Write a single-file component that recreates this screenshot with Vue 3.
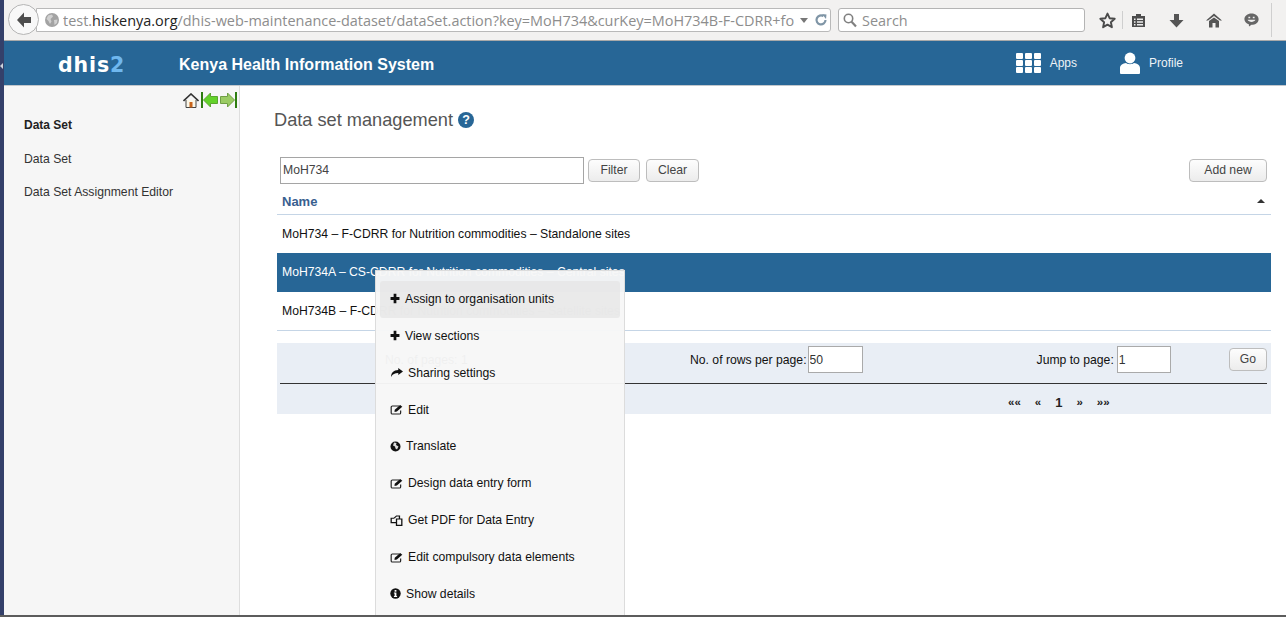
<template>
  <div class="screen">
    <div class="desktop-edge"><span class="edge-arrow"></span></div>
    <div class="window">
      <div class="browser-bar">
        <div class="back-btn">
          <svg width="20" height="20" viewBox="0 0 20 20"><path d="M10 2.5 L3 10 L10 17.5 L10 13 L17 13 L17 7 L10 7 Z" fill="#4d4d4d" /></svg>
        </div>
        <div class="url-box">
          <svg class="globe" width="14" height="14" viewBox="0 0 14 14">
            <circle cx="7" cy="7" r="7" fill="#a3a3a3" />
            <path d="M3 2.5 L7 1.5 L8 3.5 L5.5 6 L6.5 8.5 L5 11 L3.5 8 L1.5 6 Z M9 7 L12.5 6.5 L12 10 L9.5 12 Z" fill="#d0d0d0" />
          </svg>
          <span class="url"><span class="dim">test.</span>hiskenya.org<span class="dim">/dhis-web-maintenance-dataset/dataSet.action?key=MoH734&amp;curKey=MoH734B-F-CDRR+fo</span></span>
          <span class="url-drop"></span>
          <svg width="14" height="14" viewBox="0 0 14 14"><path d="M11.5 7 A4.5 4.5 0 1 1 9.5 3.2" fill="none" stroke="#7f95a6" stroke-width="2.2" /><path d="M8 1 L12.5 1.5 L12 6 Z" fill="#7f95a6" /></svg>
        </div>
        <div class="search-box">
          <svg width="14" height="15" viewBox="0 0 14 15"><circle cx="5.5" cy="5.5" r="4.2" fill="none" stroke="#808080" stroke-width="1.6" /><path d="M8.6 8.8 L13 13.4" stroke="#808080" stroke-width="2.2" /></svg>
          <span>Search</span>
        </div>
        <div class="tools">
          <svg class="t-star" width="17" height="17" viewBox="0 0 17 17"><path d="M8.5 1.6 L10.6 6.2 L15.7 6.8 L11.9 10.2 L12.9 15.2 L8.5 12.7 L4.1 15.2 L5.1 10.2 L1.3 6.8 L6.4 6.2 Z" fill="none" stroke="#4a4a4a" stroke-width="1.9" stroke-linejoin="round" /></svg>
          <span class="t-sep"></span>
          <svg class="t-clip" width="15" height="15" viewBox="0 0 15 15"><path d="M1 3 H5 V1 H10 V3 H14 V14 H1 Z" fill="#4d4d4d" /><path d="M3 5.5 H4.5 V7 H3 Z M6 5.5 H12 V7 H6 Z M3 8.2 H4.5 V9.7 H3 Z M6 8.2 H12 V9.7 H6 Z M3 11 H4.5 V12.4 H3 Z M6 11 H12 V12.4 H6 Z" fill="#eee" /></svg>
          <svg class="t-down" width="15" height="15" viewBox="0 0 15 15"><path d="M5 1 H10 V7 H14.5 L7.5 14.5 L0.5 7 H5 Z" fill="#555" /></svg>
          <svg class="t-home" width="16" height="15" viewBox="0 0 16 15"><path d="M8 0.5 L16 7.5 L14 7.5 L8 3 L2 7.5 L0 7.5 Z M3 8 L8 4.5 L13 8 V14.5 H9.5 V10 H6.5 V14.5 H3 Z" fill="#555" /></svg>
          <svg class="t-chat" width="15" height="14" viewBox="0 0 15 14"><path d="M7.5 0.5 C11.6 0.5 14.6 3 14.6 6.2 C14.6 9.4 11.6 11.8 7.5 11.8 L5 13.6 L4.8 11.2 C2.2 10.3 0.4 8.4 0.4 6.2 C0.4 3 3.4 0.5 7.5 0.5 Z" fill="#666" /><path d="M3.5 6.8 C5 9.6 10 9.6 11.5 6.8 Z M4.4 3.8 H6.2 V5.3 H4.4 Z M8.8 3.8 H10.6 V5.3 H8.8 Z" fill="#eee" /></svg>
          <span class="t-sep last"></span>
        </div>
      </div>

      <header class="app-header">
        <div class="logo">dhis<span>2</span></div>
        <div class="app-title">Kenya Health Information System</div>
        <nav class="header-nav">
          <div class="nav-item apps">
            <span class="apps-grid"><i v-for="n in 9" :key="n"></i></span>
            <span>Apps</span>
          </div>
          <div class="nav-item profile">
            <svg width="20" height="22" viewBox="0 0 20 22"><circle cx="10" cy="6" r="5.4" fill="#fff" /><path d="M0 21 V16 C0 13 3 11.6 6 11 C8 12.6 12 12.6 14 11 C17 11.6 20 13 20 16 V21 Q20 22 19 22 H1 Q0 22 0 21 Z" fill="#fff" /></svg>
            <span>Profile</span>
          </div>
        </nav>
      </header>

      <div class="body">
        <aside class="sidebar">
          <div class="side-icons">
            <svg width="16" height="15" viewBox="0 0 16 15"><path d="M3 7 V14.5 H13 V7" fill="#fbf7e8" stroke="#444" /><rect x="6.5" y="9" width="3" height="5.5" fill="#c8641a" /><path d="M0.5 8 L8 1 L15.5 8" fill="none" stroke="#333" stroke-width="1.6" /></svg>
            <svg width="17" height="16" viewBox="0 0 17 16"><rect x="0" y="0" width="2" height="16" fill="#2d7d10" /><path d="M2.5 8 L9.5 1 V4.5 H16.5 V11.5 H9.5 V15 Z" fill="#63d22a" stroke="#5aa530" /></svg>
            <svg width="17" height="16" viewBox="0 0 17 16"><path d="M14.5 8 L7.5 1 V4.5 H0.5 V11.5 H7.5 V15 Z" fill="#9acb63" stroke="#6f9e45" /><rect x="15" y="0" width="2" height="16" fill="#2d7d10" /></svg>
          </div>
          <div class="side-head">Data Set</div>
          <div class="side-link">Data Set</div>
          <div class="side-link second">Data Set Assignment Editor</div>
        </aside>

        <main class="content">
          <h1>Data set management
            <svg width="16" height="16" viewBox="0 0 16 16"><circle cx="8" cy="8" r="8" fill="#276696" /><text x="8" y="12.4" text-anchor="middle" font-family="Liberation Sans, sans-serif" font-size="12.5" font-weight="700" fill="#fff">?</text></svg>
          </h1>

          <div class="filter-row">
            <input class="filter-input" value="MoH734" />
            <button class="btn filter">Filter</button>
            <button class="btn clear">Clear</button>
            <button class="btn add">Add new</button>
          </div>

          <div class="list-head">
            <span>Name</span>
            <span class="sort-up"></span>
          </div>
          <div v-for="(row, i) in rows" :key="row" class="list-row" :class="{ selected: i === 1 }">{{ row }}</div>

          <div class="pager">
            <div class="pager-top">
              <span class="pages">No. of pages: 1</span>
              <span class="rows-label">No. of rows per page:</span>
              <input class="pager-input" value="50" />
              <span class="jump-label">Jump to page:</span>
              <input class="pager-input jump" value="1" />
              <button class="btn go">Go</button>
            </div>
            <div class="pager-links">
              <span>««</span><span>«</span><span class="cur">1</span><span>»</span><span>»»</span>
            </div>
          </div>
        </main>
      </div>
      <div class="bottom-line"></div>
    </div>

    <ul class="context-menu">
      <li v-for="(item, i) in menu" :key="item.label" :class="{ active: i === 0 }">
        <svg class="mi" :width="item.size" height="11" viewBox="0 0 11 11" preserveAspectRatio="none" v-html="icons[item.icon]"></svg>
        <span>{{ item.label }}</span>
      </li>
    </ul>
  </div>
</template>

<script setup>
const rows = [
  'MoH734 – F-CDRR for Nutrition commodities – Standalone sites',
  'MoH734A – CS-CDRR for Nutrition commodities – Central sites',
  'MoH734B – F-CDRR for Nutrition commodities – Satellite sites',
]

const icons = {
  plus: '<path d="M4 0.8 H7 V4 H10.4 V7 H7 V10.2 H4 V7 H0.6 V4 H4 Z" fill="#111"/>',
  share: '<path d="M7 1 L11 4.5 L7 8 V6 C4 6 2.2 7 1 10 C0.8 5.6 3 3.2 7 3 Z" fill="#111"/>',
  edit: '<path d="M8 2 H2 Q1 2 1 3 V9 Q1 10 2 10 H8 Q9 10 9 9 V6.5" fill="none" stroke="#222" stroke-width="1"/><path d="M4 5.8 L8.6 1 L10.4 2.8 L5.8 7.6 L3.8 7.9 Z" fill="#111"/>',
  globe: '<circle cx="5.5" cy="5.5" r="5" fill="#111"/><path d="M4 1.6 L6.5 2 L6 4 L8.5 5.5 L7 8.5 L5.5 7.5 L5 5.5 L3 4.5 Z" fill="#ddd"/>',
  copy: '<path d="M3.5 3.2 L5.5 1 H8 V4 M5.5 4 H10 V10.4 H5.5 Z M5.5 7.6 H1 V3.2 H3.5" fill="none" stroke="#111" stroke-width="1.1"/>',
  info: '<circle cx="5.5" cy="5.5" r="5.2" fill="#111"/><rect x="4.6" y="2" width="1.8" height="1.7" fill="#fff"/><path d="M3.9 4.5 H6.4 V8 H7.1 V9 H3.9 V8 H4.6 V5.5 H3.9 Z" fill="#fff"/>',
}

const menu = [
  { label: 'Assign to organisation units', icon: 'plus', size: 10 },
  { label: 'View sections', icon: 'plus', size: 10 },
  { label: 'Sharing settings', icon: 'share', size: 13 },
  { label: 'Edit', icon: 'edit', size: 13 },
  { label: 'Translate', icon: 'globe', size: 11 },
  { label: 'Design data entry form', icon: 'edit', size: 13 },
  { label: 'Get PDF for Data Entry', icon: 'copy', size: 13 },
  { label: 'Edit compulsory data elements', icon: 'edit', size: 13 },
  { label: 'Show details', icon: 'info', size: 11 },
]
</script>

<style scoped>
.screen {
  position: relative;
  display: flex;
  width: 1286px;
  height: 617px;
  overflow: hidden;
  background: #fff;
  font-family: "Liberation Sans", Arial, sans-serif;
  font-size: 12.2px;
  color: #222;
}

.desktop-edge {
  flex: 0 0 4px;
  background: #34406a;
  display: flex;
  align-items: flex-start;
}

.edge-arrow {
  margin-top: 63px;
  border-top: 3px solid transparent;
  border-bottom: 3px solid transparent;
  border-right: 3px solid #cfd3dc;
}

.window {
  flex: 1;
  min-width: 0;
  display: flex;
  flex-direction: column;
}

.browser-bar {
  flex: 0 0 41px;
  box-sizing: border-box;
  height: 41px;
  background: #f2f1f0;
  border-bottom: 1px solid #a9a9a9;
  display: flex;
  align-items: flex-start;
  position: relative;
}

.back-btn {
  flex: 0 0 31px;
  width: 31px;
  height: 31px;
  margin: 4px 0 0 4px;
  box-sizing: border-box;
  border: 1px solid #b5b5b5;
  border-radius: 50%;
  background: #f8f8f8;
  display: flex;
  align-items: center;
  justify-content: center;
  z-index: 1;
}

.url-box {
  width: 795px;
  height: 24px;
  margin: 8px 0 0 -3px;
  box-sizing: border-box;
  border: 1px solid #b9b9b9;
  border-radius: 0 3px 3px 0;
  background: #fff;
  display: flex;
  align-items: center;
  padding: 0 2px 0 8px;
}

.globe {
  flex: none;
  margin-right: 4px;
}

.url {
  flex: 1;
  min-width: 0;
  white-space: nowrap;
  overflow: hidden;
  font-family: "Open Sans", sans-serif;
  font-size: 14.45px;
  color: #222;
}

.dim {
  color: #8d8d8d;
}

.url-drop {
  flex: none;
  margin: 1px 6px 0 6px;
  border-left: 4px solid transparent;
  border-right: 4px solid transparent;
  border-top: 5px solid #777;
}

.search-box {
  width: 247px;
  height: 24px;
  margin: 8px 0 0 7px;
  box-sizing: border-box;
  border: 1px solid #b4b4b4;
  border-radius: 3px;
  background: #fff;
  display: flex;
  align-items: center;
  gap: 5px;
  padding: 0 4px;
  font-family: "Open Sans", sans-serif;
  font-size: 14.45px;
  color: #8e8e8e;
}

.tools {
  display: flex;
  align-items: center;
  height: 24px;
  margin: 8px 0 0 14px;
}

.t-sep {
  width: 1px;
  height: 18px;
  margin: 0 8px 0 6px;
  background: #cfcfcf;
}

.t-sep.last {
  height: 34px;
  margin: 0 0 0 12px;
}

.t-down {
  margin-left: 23px;
}

.t-home {
  margin-left: 22px;
}

.t-chat {
  margin-left: 22px;
}

.app-header {
  flex: 0 0 45px;
  box-sizing: border-box;
  height: 45px;
  background: #276696;
  border-bottom: 1px solid #c2c7cc;
  display: flex;
  align-items: center;
  color: #fff;
}

.logo {
  width: 175px;
  padding: 4px 0 0 54px;
  box-sizing: border-box;
  font-family: "DejaVu Sans", sans-serif;
  font-weight: 700;
  font-size: 20.5px;
  letter-spacing: 0.9px;
}

.logo span {
  color: #6fb7ee;
}

.app-title {
  padding-top: 4px;
  font-size: 16px;
  font-weight: 700;
}

.header-nav {
  margin-left: auto;
  display: flex;
  align-items: center;
  font-size: 12px;
  color: #eef3f7;
  padding-right: 103px;
}

.nav-item {
  display: flex;
  align-items: center;
}

.apps {
  gap: 9px;
}

.profile {
  margin-left: 43px;
  gap: 9px;
}

.apps-grid {
  display: grid;
  grid-template-columns: repeat(3, 7px);
  grid-auto-rows: 6px;
  gap: 1px 2px;
}

.apps-grid i {
  background: #fff;
  border-radius: 1px;
}

.body {
  flex: 1;
  min-height: 0;
  display: flex;
}

.sidebar {
  flex: 0 0 236px;
  box-sizing: border-box;
  background: #f6f6f6;
  border-right: 1px solid #dedede;
}

.side-icons {
  display: flex;
  justify-content: flex-end;
  align-items: center;
  gap: 2px;
  padding: 6px 2px 0 0;
  height: 16px;
}

.side-head {
  margin: 10px 0 0 20px;
  font-weight: 700;
  font-size: 12px;
  color: #222;
}

.side-link {
  margin: 20px 0 0 20px;
  color: #333;
}

.side-link.second {
  margin-top: 19px;
}

.content {
  flex: 1;
  min-width: 0;
  padding: 0 15px 0 37px;
}

h1 {
  margin: 0 0 0 -3px;
  padding-top: 19px;
  height: 48px;
  box-sizing: border-box;
  display: flex;
  align-items: center;
  gap: 5px;
  font-size: 18.2px;
  line-height: 24px;
  font-weight: 400;
  color: #555;
}

.filter-row {
  display: flex;
  align-items: center;
  height: 27px;
  margin-top: 23px;
  padding: 0 4px 0 3px;
}

.filter-input {
  width: 304px;
  height: 27px;
  box-sizing: border-box;
  border: 1px solid #a5a5a5;
  padding: 0 2px 2px;
  font: 12.2px "Liberation Sans", Arial, sans-serif;
  color: #444;
  outline: none;
}

.btn {
  height: 23px;
  box-sizing: border-box;
  padding: 0 0 1px;
  border: 1px solid #bdbdbd;
  border-radius: 4px;
  background: linear-gradient(#fdfdfd, #ececec);
  font: 12.2px "Liberation Sans", Arial, sans-serif;
  color: #444;
}

.filter {
  width: 52px;
  margin-left: 4px;
}

.clear {
  width: 53px;
  margin-left: 6px;
}

.add {
  width: 78px;
  margin-left: auto;
}

.list-head {
  display: flex;
  justify-content: space-between;
  align-items: center;
  height: 31px;
  padding: 4px 6px 0 5px;
  box-sizing: border-box;
  border-bottom: 1px solid #c5d5e6;
  font-weight: 700;
  font-size: 13px;
  color: #39608f;
}

.sort-up {
  border-left: 4px solid transparent;
  border-right: 4px solid transparent;
  border-bottom: 4px solid #333;
}

.list-row {
  height: 39px;
  line-height: 39px;
  padding-left: 5px;
  box-sizing: border-box;
  color: #111;
}

.list-head + .list-row {
  height: 38px;
}

.list-row:has(+ .pager) {
  border-bottom: 1px solid #c5d5e6;
}

.list-row.selected {
  background: #276696;
  color: #fff;
}

.pager {
  margin-top: 12px;
  height: 71px;
  background: #e9eef5;
}

.pager-top {
  height: 41px;
  margin: 0 4px 0 3px;
  padding-bottom: 6px;
  border-bottom: 1px solid #333;
  box-sizing: border-box;
  display: flex;
  align-items: center;
  color: #111;
}

.pages {
  margin-left: 105px;
  width: 305px;
}

.rows-label {
  margin-right: 1px;
}

.pager-input {
  width: 55px;
  height: 27px;
  margin-top: -1px;
  box-sizing: border-box;
  border: 1px solid #aaa;
  padding: 0 1px;
  font: 12.2px "Liberation Sans", Arial, sans-serif;
  color: #333;
  outline: none;
  background: #fff;
}

.jump-label {
  margin-left: 174px;
  margin-right: 3px;
}

.pager-input.jump {
  width: 54px;
}

.go {
  width: 38px;
  margin-left: auto;
  margin-top: -1px;
}

.pager-links {
  display: flex;
  align-items: center;
  gap: 14px;
  height: 30px;
  box-sizing: border-box;
  padding: 6px 0 0 731px;
  font-weight: 700;
  font-size: 11.5px;
  color: #222;
}

.pager-links .cur {
  font-size: 13px;
}

.bottom-line {
  position: absolute;
  left: 0;
  right: 0;
  bottom: 0;
  height: 2px;
  background: #5c5c5c;
  z-index: 3;
}

.context-menu {
  position: absolute;
  left: 375px;
  top: 270px;
  width: 250px;
  height: 347px;
  box-sizing: border-box;
  margin: 0;
  padding: 10px 4px 0;
  list-style: none;
  background: rgba(247, 247, 247, 0.97);
  border: 1px solid #dcdcdc;
  z-index: 2;
}

.context-menu li {
  height: 36.875px;
  box-sizing: border-box;
  padding: 0 0 1px 10px;
  display: flex;
  align-items: center;
  gap: 5px;
  border-radius: 3px;
  color: #111;
}

.context-menu li.active {
  background: rgba(228, 228, 228, 0.7);
}

.mi {
  flex: none;
}
</style>

<style>
html, body {
  margin: 0;
  background: #fff;
}
</style>
